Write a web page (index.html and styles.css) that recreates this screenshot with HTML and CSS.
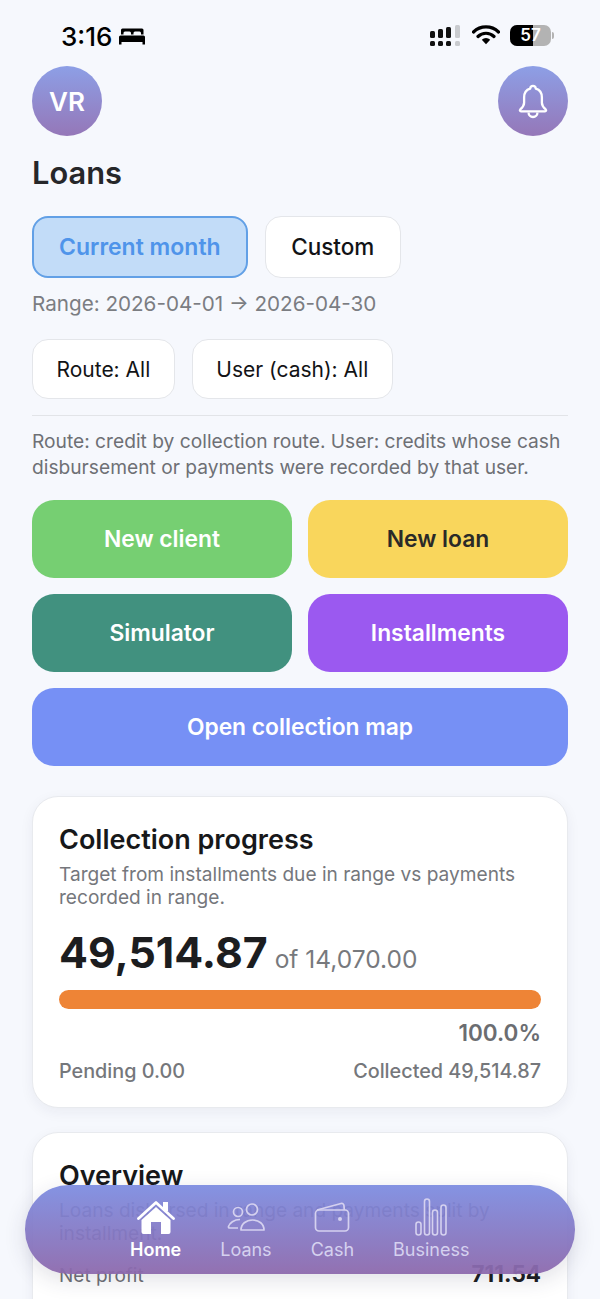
FILE: index.html
```html
<!DOCTYPE html>
<html lang="en">
    <head>
        <meta charset="UTF-8">
        <meta name="viewport" content="width=device-width, initial-scale=1.0">
        <title>Loans</title>
        <link rel="stylesheet" href="styles.css">
    </head>
    <body>
        <div class="screen">
            <div class="status-bar">
                <div class="status-left">
                    <span class="clock">3:16</span>
                    <svg class="bed" viewBox="0 0 26 18" width="26" height="18"><path d="M3 1.500h20a1.500 1.500 0 0 1 1.500 1.500v4.500h-2.500v-1.500a1.500 1.500 0 0 0-1.500-1.500h-4.500a1.500 1.500 0 0 0-1.500 1.500v1.500h-2.500v-1.500a1.500 1.500 0 0 0-1.500-1.500h-4.500a1.500 1.500 0 0 0-1.500 1.500v1.500h-2.500v-4.500a1.500 1.500 0 0 1 1.500-1.500zM1.500 8.500h23a1.500 1.500 0 0 1 1.500 1.500v7.500h-2.500v-2.500h-21v2.500h-2.500v-7.500a1.500 1.500 0 0 1 1.500-1.500z" fill="#000"/></svg>
                </div>
                <div class="status-right">
                    <svg viewBox="0 0 31 21" width="31" height="21">
                        <g fill="#111">
                            <rect x="0" y="6" width="5" height="7" rx="1.500"/><rect x="8" y="4" width="5" height="9" rx="1.500"/><rect x="16" y="2" width="5" height="11" rx="1.500"/>
                            <rect x="0" y="16" width="5" height="5" rx="1.500"/><rect x="8" y="16" width="5" height="5" rx="1.500"/><rect x="16" y="16" width="5" height="5" rx="1.500"/>
                        </g>
                        <g fill="#c9cbcf"><rect x="25" y="0" width="5" height="13" rx="1.500"/><rect x="25" y="16" width="5" height="5" rx="1.500"/></g>
                    </svg>
                    <svg class="wifi" viewBox="0 0 28 20" width="28" height="20"><path d="M1.500 7a18 18 0 0 1 25 0M6 11.500a11.500 11.500 0 0 1 16 0" fill="none" stroke="#000" stroke-width="3.200" stroke-linecap="round"/><path d="M9.800 14.800a6 6 0 0 1 8.400 0L14 19.200z" fill="#000"/></svg>
                    <div class="battery">
                        <div class="battery-level"></div>
                        <span class="battery-text">57</span>
                    </div>
                    <div class="battery-cap"></div>
                </div>
            </div>

            <div class="top-row">
                <div class="round-btn">VR</div>
                <div class="round-btn">
                    <svg viewBox="0 0 36 40" width="32" height="36" fill="none" stroke="#fff" stroke-width="2.600" stroke-linejoin="round"><path d="M18 3c1.800 0 3 1.200 3.200 3 4.600 1.300 6.800 5.200 6.800 10v6c0 3 2 5.500 4.300 7.500.9.900.4 2.200-.8 2.200H4.500c-1.200 0-1.700-1.300-.8-2.200C6 27.500 8 25 8 22v-6c0-4.800 2.200-8.700 6.800-10 .2-1.800 1.400-3 3.200-3z"/><path d="M13 33c0 3 2.200 5 5 5s5-2 5-5"/></svg>
                </div>
            </div>

            <h1 class="page-title">Loans</h1>

            <div class="chip-row">
                <div class="chip chip-range active">Current month</div>
                <div class="chip chip-range">Custom</div>
            </div>
            <p class="range-text">Range: 2026-04-01 → 2026-04-30</p>

            <div class="chip-row filters">
                <div class="chip filter">Route: All</div>
                <div class="chip filter">User (cash): All</div>
            </div>
            <hr class="divider">
            <p class="filter-note">Route: credit by collection route. User: credits whose cash disbursement or payments were recorded by that user.</p>

            <div class="actions">
                <a class="action green">New client</a>
                <a class="action yellow">New loan</a>
                <a class="action teal">Simulator</a>
                <a class="action purple">Installments</a>
                <a class="action blue wide">Open collection map</a>
            </div>

            <section class="card">
                <h2>Collection progress</h2>
                <p class="card-sub">Target from installments due in range vs payments recorded in range.</p>
                <div class="amount-row">
                    <span class="amount">49,514.87</span>
                    <span class="amount-of">of 14,070.00</span>
                </div>
                <div class="bar"><div class="bar-fill" style="width: 100%"></div></div>
                <div class="percent">100.0%</div>
                <div class="split-row">
                    <span>Pending 0.00</span>
                    <span>Collected 49,514.87</span>
                </div>
            </section>

            <section class="card">
                <h2>Overview</h2>
                <p class="card-sub">Loans disbursed in range and payments split by installment.</p>
                <div class="stat-row">
                    <span class="stat-label">Net profit</span>
                    <span class="stat-value">711.54</span>
                </div>
            </section>
        </div>

        <nav class="tabbar">
            <a class="tab current">
                <svg viewBox="0 0 38 38" width="38" height="38"><path d="M1.500 20.500 19 4.500 36.500 20.500" fill="none" stroke="#fff" stroke-width="2.800" stroke-linecap="round" stroke-linejoin="round"/><rect x="26" y="4" width="5" height="9" fill="#fff"/><path d="M19 9 33.500 22v12a2 2 0 0 1-2 2H24V24H14v12H6.500a2 2 0 0 1-2-2V22z" fill="#fff"/></svg>
                <span>Home</span>
            </a>
            <a class="tab">
                <svg viewBox="0 0 38 38" width="38" height="38" fill="none" stroke="#d5d1ef" stroke-width="1.700" stroke-linejoin="round"><circle cx="11" cy="14" r="4.500"/><circle cx="25" cy="11.500" r="5.500"/><path d="M14 32c0-6 5-10 11.500-10S37 26 37 32z"/><path d="M13 21.500C7 21.500 2.500 25 1.500 28.500c-.2 1 .3 1.500 1.200 1.500H11"/></svg>
                <span>Loans</span>
            </a>
            <a class="tab">
                <svg viewBox="0 0 38 38" width="38" height="38" fill="none" stroke="#d5d1ef" stroke-width="1.700"><rect x="2.500" y="12" width="33" height="21" rx="3.500"/><path d="M4 12 28 5.500c1.500-.4 3 .5 3 2.500l.3 4"/><circle cx="27" cy="21" r="2" fill="#d5d1ef" stroke="none"/></svg>
                <span>Cash</span>
            </a>
            <a class="tab">
                <svg viewBox="0 0 38 38" width="38" height="38" fill="none" stroke="#d5d1ef" stroke-width="1.600"><rect x="4" y="24" width="5" height="13" rx="2.500"/><rect x="12.500" y="1" width="5" height="36" rx="2.500"/><rect x="20.500" y="12" width="5" height="25" rx="2.500"/><rect x="29" y="7" width="5" height="30" rx="2.500"/></svg>
                <span>Business</span>
            </a>
        </nav>
    </body>
</html>
```

FILE: styles.css
```css
html, body {
    margin: 0;
    height: 1299px;
    overflow: hidden;
}

body {
    position: relative;
    background-color: #f6f8fd;
    color: #17181a;
    font-family: Inter, "Liberation Sans", sans-serif;
}

.screen {
    padding: 0 32px;
}

.status-bar {
    height: 66px;
    margin: 0 -32px;
    padding: 20px 46px 0 61px;
    box-sizing: border-box;
    display: flex;
    justify-content: space-between;
    align-items: flex-start;
}

.status-left {
    display: flex;
    align-items: center;
    gap: 7px;
    height: 32px;
}

.clock {
    font-size: 26px;
    font-weight: 500;
    color: #000;
}

.status-right {
    display: flex;
    align-items: center;
    height: 32px;
    margin-top: -1px;
}

.wifi {
    margin-left: 11px;
}

.battery {
    position: relative;
    width: 41px;
    height: 21px;
    margin-left: 10px;
    border-radius: 7px;
    background-color: #b3b3b3;
    overflow: hidden;
    display: flex;
    align-items: center;
    justify-content: center;
}

.battery-level {
    position: absolute;
    left: 0;
    top: 0;
    bottom: 0;
    width: 57%;
    background-color: #000;
}

.battery-text {
    position: relative;
    color: #fff;
    font-size: 17px;
    font-weight: 600;
}

.battery-cap {
    width: 2px;
    height: 7px;
    margin-left: 1px;
    border-radius: 0 2px 2px 0;
    background-color: #b3b3b3;
}

.top-row {
    display: flex;
    justify-content: space-between;
}

.round-btn {
    width: 70px;
    height: 70px;
    border-radius: 50%;
    background: linear-gradient(180deg, #8d9fe6, #9577b8);
    color: #fff;
    font-size: 26px;
    font-weight: 600;
    display: flex;
    align-items: center;
    justify-content: center;
}

.page-title {
    margin: 16px 0 0;
    font-size: 30.800px;
    line-height: 42px;
    font-weight: 600;
    color: #26272a;
}

.chip-row {
    display: flex;
    gap: 17px;
    margin-top: 22px;
}

.chip {
    box-sizing: border-box;
    background-color: #fff;
    border: 1.500px solid #e4e6ea;
    color: #121316;
    display: flex;
    align-items: center;
    justify-content: center;
}

.chip-range {
    height: 62px;
    padding: 0 25.500px 2px;
    border-radius: 16px;
    font-size: 22.500px;
    font-weight: 500;
}

.chip-range.active {
    padding: 0 25px;
    background-color: #c2dcf8;
    border: 2px solid #62a0e6;
    color: #4f94ea;
    font-size: 23px;
    font-weight: 600;
}

.range-text {
    margin: 12px 0 0;
    font-size: 20.650px;
    line-height: 28px;
    color: #7b7d82;
}

.filters {
    margin-top: 21px;
}

.filter {
    height: 60px;
    padding: 0 23.500px;
    border-radius: 16px;
    font-size: 21px;
}

.divider {
    margin: 16px 0 0;
    border: 0;
    border-top: 1.500px solid #e2e4e8;
}

.filter-note {
    margin: 12px 0 0;
    font-size: 19.200px;
    line-height: 26px;
    color: #6e7075;
}

.actions {
    display: grid;
    grid-template-columns: 1fr 1fr;
    gap: 16px;
    margin-top: 20px;
}

.action {
    height: 78px;
    padding-bottom: 2px;
    box-sizing: border-box;
    border-radius: 22px;
    color: #fff;
    font-size: 22.800px;
    font-weight: 600;
    display: flex;
    align-items: center;
    justify-content: center;
}

.action.wide {
    grid-column: 1 / 3;
}

.green { background-color: #76cf72; }
.yellow { background-color: #f9d65c; color: #2a2a28; }
.teal { background-color: #41917f; }
.purple { background-color: #9b59f0; }
.blue { background-color: #7690f5; }

.card {
    margin-top: 30px;
    padding: 26px 26px 0;
    background-color: #fff;
    border: 1.500px solid #e8eaee;
    border-radius: 26px;
    box-shadow: 0 4px 14px rgba(30, 40, 70, 0.06);
    height: 312px;
    box-sizing: border-box;
}

.card + .card {
    margin-top: 24px;
}

.card h2 {
    margin: 0;
    font-size: 27px;
    line-height: 34px;
    font-weight: 600;
    color: #17181a;
}

.card-sub {
    margin: 6px 0 0;
    font-size: 19.100px;
    line-height: 23px;
    color: #75777c;
}

.amount-row {
    display: flex;
    align-items: baseline;
    gap: 7px;
    margin-top: 16px;
}

.amount {
    font-size: 42.800px;
    line-height: 56px;
    font-weight: 700;
    color: #1c1d1f;
}

.amount-of {
    font-size: 24.500px;
    color: #77797d;
}

.bar {
    margin-top: 9px;
    height: 19px;
    border-radius: 10px;
    background-color: #e8eaee;
    overflow: hidden;
}

.bar-fill {
    height: 100%;
    background-color: #ee8436;
}

.percent {
    margin-top: 10px;
    text-align: right;
    font-size: 22.500px;
    line-height: 28px;
    font-weight: 600;
    color: #6b6d71;
}

.split-row {
    display: flex;
    justify-content: space-between;
    margin-top: 11px;
    font-size: 19.800px;
    line-height: 26px;
    font-weight: 500;
    color: #75777b;
}

.stat-row {
    display: flex;
    justify-content: space-between;
    align-items: baseline;
    margin-top: 15px;
}

.stat-label {
    font-size: 19px;
    color: #6e7075;
}

.stat-value {
    font-size: 22.500px;
    font-weight: 700;
    color: #1c1d1f;
}

/* floats over the page, content shows through it */
.tabbar {
    position: absolute;
    left: 25px;
    top: 1185px;
    width: 550px;
    height: 89px;
    padding: 11px 0 0 105px;
    box-sizing: border-box;
    border-radius: 44px;
    background: linear-gradient(180deg, rgba(122, 138, 224, 0.92), rgba(140, 104, 172, 0.94));
    box-shadow: 0 6px 22px rgba(40, 40, 80, 0.14);
    display: flex;
    align-items: flex-start;
    gap: 39px;
}

.tab {
    display: flex;
    flex-direction: column;
    align-items: center;
    color: #d5d1ef;
    font-size: 18px;
    line-height: 24px;
}

.tab svg {
    display: block;
    margin: 2px 0;
}

.tab.current {
    color: #fff;
    font-weight: 600;
}
```
